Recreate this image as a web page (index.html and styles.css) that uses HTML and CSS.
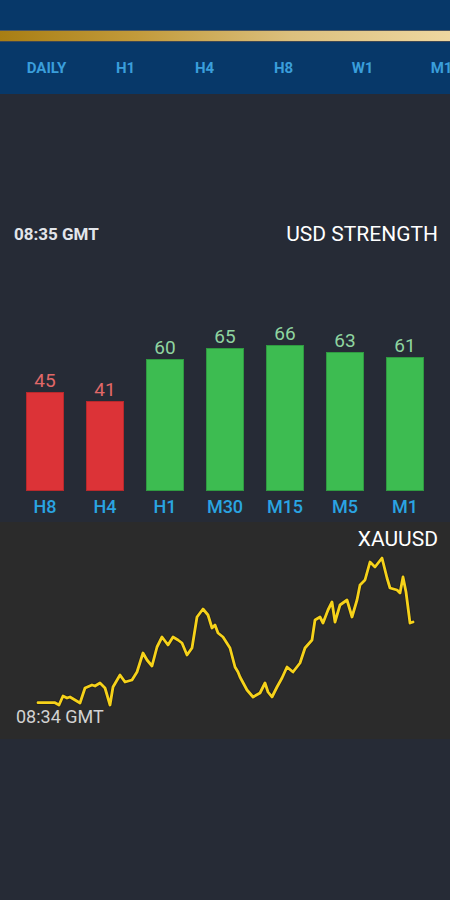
FILE: index.html
```html
<!DOCTYPE html>
<html lang="en">
<head>
<meta charset="utf-8">
<title>USD Strength</title>
<link rel="stylesheet" href="styles.css">
</head>
<body>
<div class="app">
  <header class="topbar"></header>
  <div class="goldbar"></div>
  <nav class="tabs">
    <span class="tab">DAILY</span>
    <span class="tab">H1</span>
    <span class="tab">H4</span>
    <span class="tab">H8</span>
    <span class="tab">W1</span>
    <span class="tab">M1</span>
  </nav>
  <main class="strength">
    <div class="strength-head">
      <span class="time">08:35 GMT</span>
      <span class="title">USD STRENGTH</span>
    </div>
    <div class="bars">
      <div class="col"><span class="val val-red">45</span><div class="bar bar-red" style="height:99px"></div><span class="lbl">H8</span></div>
      <div class="col"><span class="val val-red">41</span><div class="bar bar-red" style="height:90px"></div><span class="lbl">H4</span></div>
      <div class="col"><span class="val val-green">60</span><div class="bar bar-green" style="height:132px"></div><span class="lbl">H1</span></div>
      <div class="col"><span class="val val-green">65</span><div class="bar bar-green" style="height:143px"></div><span class="lbl">M30</span></div>
      <div class="col"><span class="val val-green">66</span><div class="bar bar-green" style="height:146px"></div><span class="lbl">M15</span></div>
      <div class="col"><span class="val val-green">63</span><div class="bar bar-green" style="height:139px"></div><span class="lbl">M5</span></div>
      <div class="col"><span class="val val-green">61</span><div class="bar bar-green" style="height:134px"></div><span class="lbl">M1</span></div>
    </div>
  </main>
  <section class="chart">
    <svg class="chart-svg" viewBox="0 0 450 217" width="450" height="217">
      <polyline class="line-shadow" points="38,180.7 55,180.7 59,183 63,174 67,176 70,175 75,178 80,181 85,166 92,163 95,164 100,161 105,166 110,183 113,165 120,153 125,160 132,158 137,150 143,131 147,138 152,144 157,125 162,115 168,123 173,115 178,118 182,121 187,133 192,126 197,95 203,87 208,93 212,106 215,103 218,111 223,115 230,126 235,145 238,150 240,155 247,168 253,175 260,171 265,161 268,170 272,175 277,165 282,156 287,145 293,150 300,141 305,126 312,118 315,98 320,95 323,101 328,88 332,80 335,100 340,83 347,78 352,95 357,78 360,63 365,58 370,40 375,45 382,36 387,56 390,66 397,68 400,71 403,55 406,70 410,101 413,100"/>
      <polyline class="line" points="38,180.7 55,180.7 59,183 63,174 67,176 70,175 75,178 80,181 85,166 92,163 95,164 100,161 105,166 110,183 113,165 120,153 125,160 132,158 137,150 143,131 147,138 152,144 157,125 162,115 168,123 173,115 178,118 182,121 187,133 192,126 197,95 203,87 208,93 212,106 215,103 218,111 223,115 230,126 235,145 238,150 240,155 247,168 253,175 260,171 265,161 268,170 272,175 277,165 282,156 287,145 293,150 300,141 305,126 312,118 315,98 320,95 323,101 328,88 332,80 335,100 340,83 347,78 352,95 357,78 360,63 365,58 370,40 375,45 382,36 387,56 390,66 397,68 400,71 403,55 406,70 410,101 413,100"/>
    </svg>
    <span class="chart-title">XAUUSD</span>
    <span class="chart-time">08:34 GMT</span>
  </section>
  <footer class="bottom"></footer>
</div>
</body>
</html>
```
FILE: styles.css
```css
* { box-sizing: border-box; }
html, body {
  margin: 0;
  padding: 0;
  background: #262b36;
  font-family: Roboto, "Liberation Sans", sans-serif;
}
.app {
  width: 450px;
  height: 900px;
  display: flex;
  flex-direction: column;
  overflow: hidden;
}
.topbar {
  height: 30px;
  background: #073869;
}
.goldbar {
  height: 12px;
  border-top: 1px solid #4d5660;
  border-bottom: 1px solid #3e4854;
  background: linear-gradient(to right, #a87e14 0%, #c29a3a 30%, #dcc07e 65%, #eed7a0 100%);
}
.tabs {
  height: 52px;
  background: #073869;
  display: flex;
  align-items: center;
  padding-left: 7px;
  overflow: hidden;
}
.tab {
  flex: 0 0 79px;
  text-align: center;
  color: #3a9edb;
  font-size: 15px;
  font-weight: 700;
  white-space: nowrap;
}
.strength {
  height: 428px;
  background: #262b36;
  display: flex;
  flex-direction: column;
  justify-content: flex-end;
}
.strength-head {
  display: flex;
  justify-content: space-between;
  align-items: center;
  padding: 0 12px 0 14px;
  margin-bottom: 78px;
}
.time {
  color: #e2e5ea;
  font-size: 17px;
  font-weight: 700;
}
.title {
  color: #ffffff;
  font-size: 21px;
}
.bars {
  display: flex;
  align-items: flex-end;
  padding: 0 15px 5px;
}
.col {
  flex: 0 0 60px;
  display: flex;
  flex-direction: column;
  align-items: center;
}
.val {
  font-size: 19px;
  line-height: 20px;
  margin-bottom: 1px;
}
.val-red { color: #e06868; }
.val-green { color: #8fd5a0; }
.bar {
  width: 38px;
}
.bar-red {
  background: #dc3337;
  border: 1px solid #b8292c;
}
.bar-green {
  background: #3dbc51;
  border: 1px solid #2f9a41;
}
.lbl {
  margin-top: 6px;
  font-size: 18px;
  line-height: 20px;
  font-weight: 500;
  color: #2aa4e2;
}
.chart {
  position: relative;
  height: 217px;
  background: #2b2b2b;
}
.chart-svg {
  display: block;
}
.line {
  fill: none;
  stroke: #f6d21a;
  stroke-width: 2.8;
  stroke-linejoin: round;
  stroke-linecap: round;
}
.line-shadow {
  fill: none;
  stroke: #1c1c1c;
  stroke-width: 4.5;
  stroke-linejoin: round;
  stroke-linecap: round;
  opacity: 0.6;
}
.chart-title {
  position: absolute;
  right: 12px;
  top: 5px;
  color: #ffffff;
  font-size: 21px;
}
.chart-time {
  position: absolute;
  left: 16px;
  top: 184px;
  color: #d2d2d2;
  font-size: 18px;
}
.bottom {
  flex: 1;
  background: #262b36;
}
```
